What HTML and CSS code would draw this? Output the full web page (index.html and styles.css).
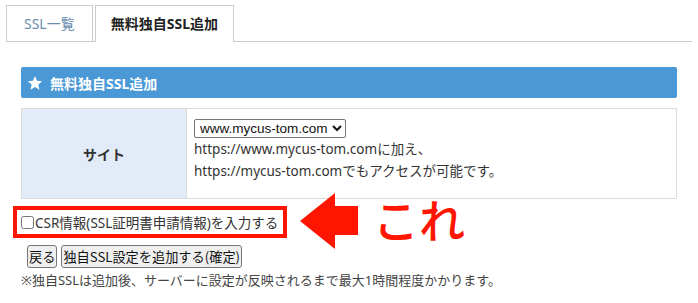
FILE: index.html
```html
<!DOCTYPE html>
<html lang="ja">
<head>
  <meta charset="UTF-8" />
  <meta name="viewport" content="width=device-width, initial-scale=1.0"/>
  <title>無料独自SSL追加</title>
  <link rel="stylesheet" href="styles.css">
</head>
<body>
  <!-- Tabs -->
  <div class="tabs">
    <div class="tab">SSL一覧</div>
    <div class="tab active">無料独自SSL追加</div>
  </div>

  <div class="content">
    <!-- Section header -->
    <div class="section-head">
      <svg class="star" width="16" height="16" viewBox="0 0 24 24">
        <path d="M12 1.5l3.1 7.1 7.7.7-5.8 5.1 1.7 7.6L12 18l-6.7 4 1.7-7.6-5.8-5.1 7.7-.7z" fill="#fff"/>
      </svg>
      無料独自SSL追加
    </div>

    <!-- Form table -->
    <table class="form-table">
      <tr>
        <th>サイト</th>
        <td>
          <select class="site-select">
            <option>www.mycus-tom.com</option>
          </select>
          <div class="note-line">https://www.mycus-tom.comに加え、</div>
          <div class="note-line">https://mycus-tom.comでもアクセスが可能です。</div>
        </td>
      </tr>
    </table>

    <div class="csr-row">
      <label><input type="checkbox" class="csr-check">CSR情報(SSL証明書申請情報)を入力する</label>
    </div>

    <div class="actions">
      <button class="btn">戻る</button>
      <button class="btn">独自SSL設定を追加する(確定)</button>
    </div>
    <p class="footnote">※独自SSLは追加後、サーバーに設定が反映されるまで最大1時間程度かかります。</p>
  </div>

  <!-- Annotation overlay -->
  <div class="mark-box"></div>
  <svg class="mark-arrow" width="60" height="58" viewBox="0 0 60 58">
    <polygon points="0,28 35,0 35,13 58,13 58,42 35,42 35,56" fill="#ff1500"/>
  </svg>
  <div class="mark-text">これ</div>
</body>
</html>
```

FILE: styles.css
```css
body {
  margin: 0;
  font-family: 'Noto Sans', 'Noto Sans CJK JP', sans-serif;
  font-size: 13px;
  color: #333;
  background: #fff;
  position: relative;
  width: 698px;
  height: 303px;
  overflow: hidden;
}

.tabs {
  display: flex;
  gap: 2px;
  margin: 5px 6px 0 6px;
  border-bottom: 1px solid #ccc;
}

.tab {
  height: 35px;
  line-height: 35px;
  padding: 0 17px;
  border: 1px solid #ccc;
  border-bottom: none;
  font-size: 14px;
  color: #6a8db0;
  background: #fff;
}

.tab.active {
  color: #222;
  font-weight: bold;
  margin-bottom: -1px;
  height: 36px;
  padding: 0 15px;
}

.content {
  margin: 25px 21px 0 21px;
}

.section-head {
  display: flex;
  align-items: center;
  gap: 7px;
  height: 31px;
  padding-left: 6px;
  background-color: #4a98d6;
  border-radius: 2px;
  color: #fff;
  font-weight: bold;
  font-size: 14px;
}

.form-table {
  width: 100%;
  margin-top: 10px;
  border-collapse: collapse;
}

.form-table th,
.form-table td {
  border: 1px solid #dcdcdc;
}

.form-table th {
  width: 162px;
  background-color: #e1ecf8;
  font-size: 14px;
  color: #333;
}

.form-table td {
  padding: 10px 7px 16px 7px;
  vertical-align: top;
}

.site-select {
  font-family: 'Liberation Sans', sans-serif;
  font-size: 13.5px;
  height: 19px;
  padding: 0 1px;
  border: 1px solid #767676;
  border-radius: 2px;
  color: #111;
  background: #fff;
}

.note-line {
  line-height: 22px;
  font-size: 13.5px;
  color: #333;
}

.csr-row {
  margin-top: 11px;
  height: 24px;
  display: flex;
  align-items: center;
  font-size: 13.5px;
}

.csr-row label {
  display: flex;
  align-items: center;
}

.csr-check {
  width: 13px;
  height: 13px;
  margin: 0 1px 0 0;
}

.actions {
  margin: 11px 0 0 6px;
  display: flex;
  gap: 4px;
}

.btn {
  font-family: 'Noto Sans CJK JP', sans-serif;
  font-size: 13.2px;
  height: 23px;
  padding: 0 1px;
  border: 1px solid #767676;
  border-radius: 3px;
  background: #efefef;
  color: #111;
  line-height: 20px;
}

.footnote {
  margin: 2px 0 0 0;
  font-size: 13px;
  color: #444;
  line-height: 20px;
}

.mark-box {
  position: absolute;
  left: 13px;
  top: 206px;
  width: 266px;
  height: 24px;
  border: 4px solid #ff1500;
}

.mark-arrow {
  position: absolute;
  left: 300px;
  top: 193px;
}

.mark-text {
  position: absolute;
  left: 373px;
  top: 188px;
  font-family: 'Noto Sans CJK JP', sans-serif;
  font-size: 46px;
  font-weight: 500;
  line-height: 60px;
  color: #ff1500;
}
```
